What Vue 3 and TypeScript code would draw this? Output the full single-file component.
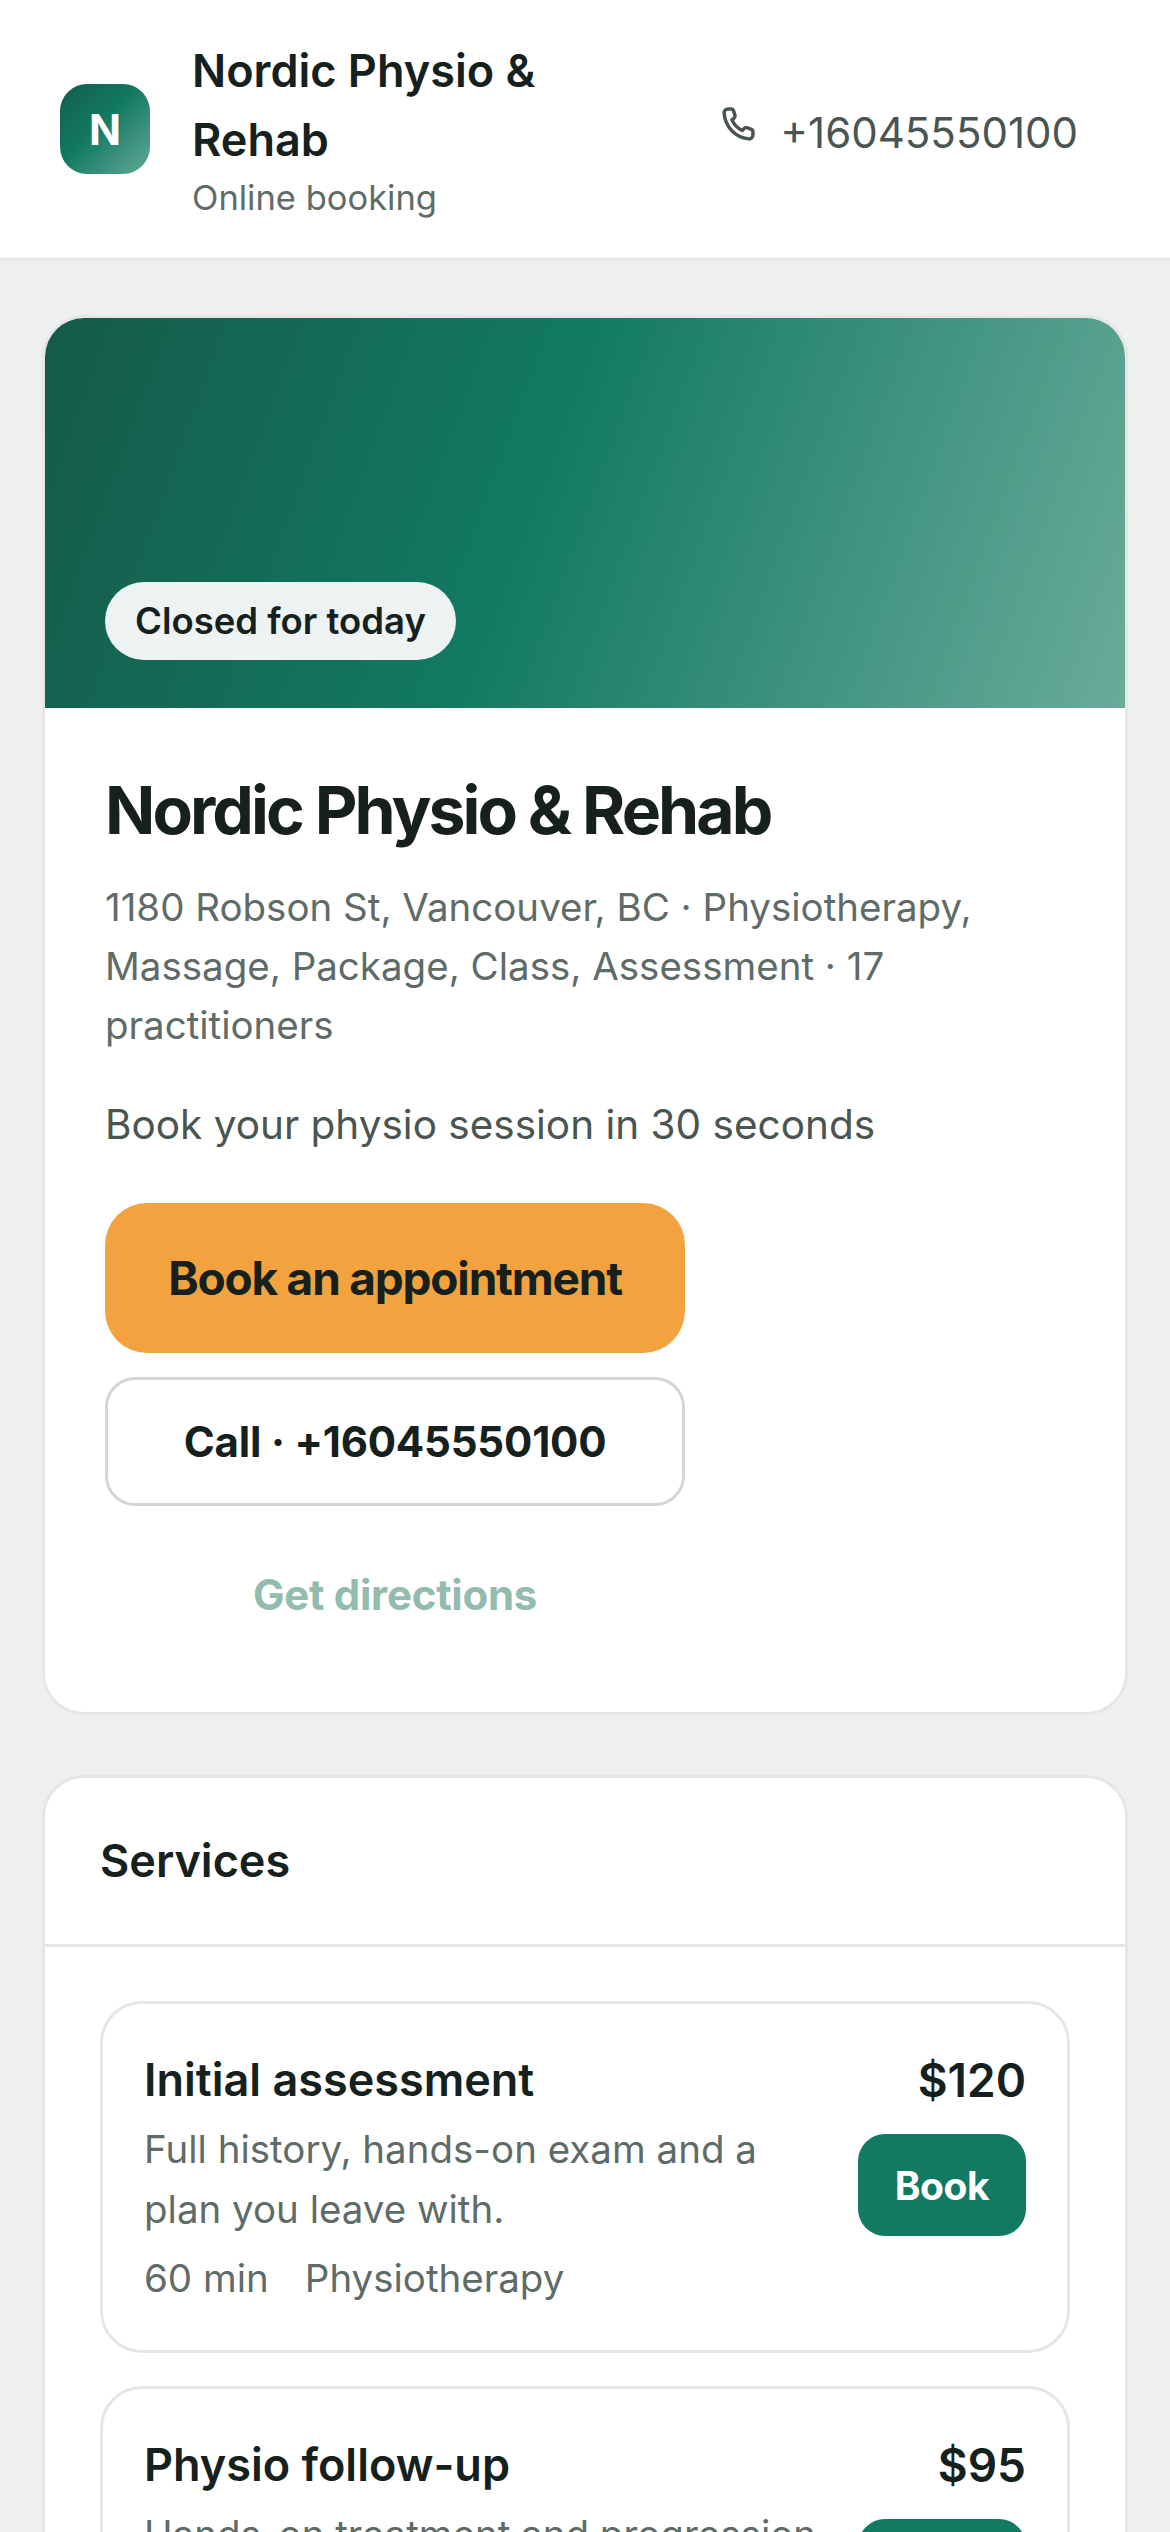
<script setup lang="ts">
import { ref } from 'vue'

interface Service {
  name: string
  price: string
  description: string
  duration: string
  category: string
}

const phone = '+16045550100'

const services = ref<Service[]>([
  {
    name: 'Initial assessment',
    price: '$120',
    description: 'Full history, hands-on exam and a plan you leave with.',
    duration: '60 min',
    category: 'Physiotherapy'
  },
  {
    name: 'Physio follow-up',
    price: '$95',
    description: 'Hands-on treatment and progression of your plan.',
    duration: '30 min',
    category: 'Physiotherapy'
  }
])
</script>

<template>
  <div class="page">
    <header class="topbar">
      <div class="brand">
        <div class="brand__logo">N</div>
        <div class="brand__text">
          <div class="brand__name">Nordic Physio &amp; Rehab</div>
          <div class="brand__sub">Online booking</div>
        </div>
      </div>
      <a class="topbar__phone" href="#">
        <svg class="topbar__icon" viewBox="0 0 24 24" fill="none" stroke="currentColor" stroke-width="2.2" stroke-linecap="round" stroke-linejoin="round">
          <path d="M5 2.500h2.200c.6 0 1.100.4 1.300 1l1 3.200c.1.5 0 1-.4 1.300L7.600 9.400c1.200 2.900 3.500 5.300 6.400 6.700l1.500-1.500c.4-.4.9-.5 1.400-.3l3 1.100c.6.2.9.7.9 1.300V19c0 1.400-1.200 2.500-2.600 2.400C9.800 20.700 3.200 13.900 2.600 5c-.1-1.400 1-2.500 2.400-2.500z" />
        </svg>
        <span>{{ phone }}</span>
      </a>
    </header>

    <main class="content">
      <section class="card hero">
        <div class="hero__banner">
          <span class="hero__status">Closed for today</span>
        </div>
        <div class="hero__body">
          <h1>Nordic Physio &amp; Rehab</h1>
          <p class="hero__meta">1180 Robson St, Vancouver, BC · Physiotherapy, Massage, Package, Class, Assessment · 17 practitioners</p>
          <p class="hero__tagline">Book your physio session in 30 seconds</p>
          <div class="hero__actions">
            <button type="button" class="btn btn--primary">Book an appointment</button>
            <button type="button" class="btn btn--outline">Call · {{ phone }}</button>
            <button type="button" class="btn btn--link">Get directions</button>
          </div>
        </div>
      </section>

      <section class="card services">
        <h2 class="services__title">Services</h2>
        <div class="services__list">
          <article v-for="service in services" :key="service.name" class="service">
            <div class="service__info">
              <h3>{{ service.name }}</h3>
              <p>{{ service.description }}</p>
              <div class="service__meta">
                <span>{{ service.duration }}</span>
                <span>{{ service.category }}</span>
              </div>
            </div>
            <div class="service__side">
              <span class="service__price">{{ service.price }}</span>
              <button type="button" class="service__book">Book</button>
            </div>
          </article>
        </div>
      </section>
    </main>
  </div>
</template>

<style>
html,
body {
  margin: 0;
  background: #eef0ef;
}
</style>

<style scoped>
.page {
  height: 2532px;
  overflow: hidden;
  background: #eef0ef;
  color: #16211d;
  font-family: Inter, "Noto Sans", sans-serif;
}

.topbar {
  display: flex;
  align-items: center;
  justify-content: space-between;
  gap: 36px;
  height: 258px;
  padding: 0 60px;
  background: #fff;
  border-bottom: 3px solid #e4e7e6;
}

.brand {
  display: flex;
  align-items: center;
  gap: 42px;
  flex: 1;
  min-width: 0;
}

.brand__logo {
  flex: none;
  display: flex;
  align-items: center;
  justify-content: center;
  width: 90px;
  height: 90px;
  border-radius: 27px;
  background: linear-gradient(135deg, #145c4a 0%, #127a62 45%, #66a898 100%);
  color: #fff;
  font-size: 42px;
  font-weight: 700;
}

.brand__name {
  font-size: 45px;
  font-weight: 600;
  line-height: 69px;
}

.brand__sub {
  font-size: 34.5px;
  line-height: 48px;
  color: #5f6b67;
}

.topbar__phone {
  display: flex;
  align-items: center;
  gap: 22px;
  margin-top: 6px;
  padding: 0 32px;
  color: #4a5551;
  font-size: 42px;
  text-decoration: none;
}

.topbar__icon {
  flex: none;
  width: 38px;
  height: 38px;
  margin-top: -16px;
}

.content {
  display: flex;
  flex-direction: column;
  gap: 60px;
  padding: 54px 42px 0;
}

.card {
  background: #fff;
  border: 3px solid #e4e7e6;
  border-radius: 42px;
  overflow: hidden;
}

.hero__banner {
  display: flex;
  align-items: flex-end;
  height: 390px;
  padding: 0 60px 48px;
  box-sizing: border-box;
  background: linear-gradient(110deg, #155a49 0%, #127a62 45%, #6aab9b 100%);
}

.hero__status {
  padding: 0 30px;
  line-height: 78px;
  border-radius: 39px;
  background: #edf3f2;
  font-size: 36.5px;
  font-weight: 600;
}

.hero__body {
  padding: 60px 60px 53px;
}

.hero__body h1 {
  margin: 0;
  font-size: 66px;
  font-weight: 700;
  line-height: 84px;
  letter-spacing: -2.9px;
}

.hero__meta {
  margin: 26px 0 0;
  font-size: 38.5px;
  line-height: 59px;
  color: #5f6b67;
}

.hero__tagline {
  margin: 40px 0 0;
  font-size: 40.5px;
  line-height: 60px;
  color: #4a5551;
}

.hero__actions {
  display: flex;
  flex-direction: column;
  gap: 24px;
  width: 580px;
  margin-top: 48px;
}

.btn {
  padding: 0;
  border: 0;
  background: none;
  font-family: inherit;
  color: #16211d;
  font-weight: 700;
}

.btn--primary {
  height: 150px;
  border-radius: 42px;
  background: #f2a33f;
  font-size: 46px;
  letter-spacing: -1.2px;
}

.btn--outline {
  height: 129px;
  border: 3px solid #d2d6d5;
  border-radius: 30px;
  background: #fff;
  font-size: 42px;
  letter-spacing: -0.2px;
}

.btn--link {
  height: 129px;
  color: #93bbae;
  font-size: 42px;
  letter-spacing: -0.25px;
}

.services__title {
  margin: 0;
  padding: 50px 55px;
  border-bottom: 3px solid #e4e7e6;
  font-size: 45px;
  font-weight: 600;
  line-height: 66px;
}

.services__list {
  display: flex;
  flex-direction: column;
  gap: 33px;
  padding: 54px 55px;
}

.service {
  display: flex;
  justify-content: space-between;
  gap: 36px;
  padding: 43px 41px 42px;
  background: #fff;
  border: 3px solid #e4e7e6;
  border-radius: 42px;
}

.service__info h3 {
  margin: 0;
  font-size: 45px;
  font-weight: 600;
  line-height: 66px;
}

.service__info p {
  margin: 6px 0 0;
  font-size: 38.5px;
  line-height: 60px;
  color: #5f6b67;
}

.service__meta {
  display: flex;
  gap: 36px;
  margin-top: 9px;
  font-size: 38.5px;
  line-height: 60px;
  color: #5f6b67;
}

.service__side {
  flex: none;
  display: flex;
  flex-direction: column;
  align-items: flex-end;
  gap: 21px;
}

.service__price {
  font-size: 46px;
  font-weight: 600;
  line-height: 66px;
}

.service__book {
  width: 168px;
  height: 102px;
  padding: 0;
  border: 0;
  border-radius: 27px;
  background: #127a62;
  color: #fff;
  font-family: inherit;
  font-size: 39px;
  font-weight: 700;
  letter-spacing: -0.4px;
}
</style>
